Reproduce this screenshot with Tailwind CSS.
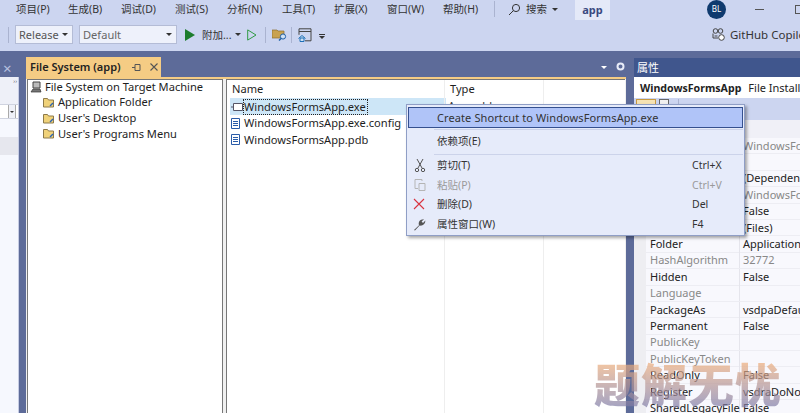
<!DOCTYPE html>
<html>
<head>
<meta charset="utf-8">
<script src="https://cdn.jsdelivr.net/npm/@tailwindcss/browser@4"></script>
</head>
<body class="m-0">
<div class="relative w-[800px] h-[413px] overflow-hidden bg-[#5d6b99] text-[11.1px] leading-[16px] text-[#1e1e1e] font-['Noto_Sans','Noto_Sans_CJK_SC',sans-serif]">
  <!-- menu bar -->
  <div class="h-[17px] bg-[#ccd5f0] flex items-center text-[10.5px] text-[#333] pl-[16px] pt-[1px] [&>*]:shrink-0">
    <span class="w-[52px]">项目(P)</span><span class="w-[53px]">生成(B)</span><span class="w-[54px]">调试(D)</span><span class="w-[52px]">测试(S)</span><span class="w-[55px]">分析(N)</span><span class="w-[52px]">工具(T)</span><span class="w-[53px]">扩展(X)</span><span class="w-[56px]">窗口(W)</span><span class="w-[51px]">帮助(H)</span>
    <span class="w-px h-[16px] bg-[#aab3d0] mr-[13px]"></span>
    <svg class="w-[13px] h-[13px] mr-[5px]" viewBox="0 0 13 13" fill="none" stroke="#333"><circle cx="8" cy="5" r="3.6"/><path d="M5.4 7.6L1 12"/></svg>
    <span class="w-[33px]">搜索</span>
    <span class="w-0 h-0 border-x-[3px] border-x-transparent border-t-[3px] border-t-[#333] ml-[-7px] mr-[17px]"></span>
    <span class="w-[35px] h-[20px] bg-[#e4e9f8] mt-[1px] flex items-center justify-center font-bold text-[#3a4a80] text-[11px]">app</span>
    <span class="ml-[97px] w-[19px] h-[19px] rounded-full bg-[#0f3a6e] text-white text-[8px] flex items-center justify-center">BL</span>
    <span class="ml-[29px] w-[9px] h-px bg-[#555]"></span>
    <span class="ml-[31px] w-[9px] h-[9px] border border-[#555]"></span>
  </div>
  <!-- toolbar -->
  <div class="h-[34px] bg-[#ccd5f0] flex items-center pt-[1px] pl-[6px] text-[#333] [&>*]:shrink-0">
    <span class="w-px h-[16px] bg-[#aab3d0] ml-[2px] mr-[6px]"></span>
    <div class="w-[58px] h-[19px] bg-[#eef1fb] border border-[#b4bcd6] flex items-center justify-between px-[3px] text-[#555] text-[11px]">Release<span class="w-0 h-0 border-x-[3px] border-x-transparent border-t-[3px] border-t-[#333] mr-[1px]"></span></div>
    <div class="w-[98px] h-[19px] bg-[#eef1fb] border border-[#b4bcd6] flex items-center justify-between px-[3px] ml-[6px] text-[#666]">Default<span class="w-0 h-0 border-x-[3px] border-x-transparent border-t-[3px] border-t-[#333] mr-[1px]"></span></div>
    <svg class="ml-[8px] w-[10px] h-[12px]" viewBox="0 0 10 12"><path d="M0 0L10 6L0 12Z" fill="#1c7c2d"/></svg>
    <span class="ml-[7px] text-[10.5px] w-[29px] whitespace-nowrap">附加...</span>
    <span class="ml-[4px] w-0 h-0 border-x-[3px] border-x-transparent border-t-[3px] border-t-[#333]"></span>
    <svg class="ml-[6px] w-[10px] h-[12px]" viewBox="0 0 10 12" fill="none" stroke="#2f9a44"><path d="M.7.9L9 6L.7 11.1Z"/></svg>
    <span class="w-px h-[16px] bg-[#aab3d0] ml-[8px] mr-[6px]"></span>
    <svg class="w-[15px] h-[13px]" viewBox="0 0 15 13"><path d="M0 2h5l1 1h6v7H0z" fill="#c9a24f" stroke="#8a6d2c" stroke-width=".7"/><circle cx="11" cy="8.5" r="2.6" fill="#cfe0f4" stroke="#1d5fa8"/><path d="M9 10.5L7 12.5" stroke="#1d5fa8" stroke-width="1.4"/></svg>
    <span class="w-px h-[16px] bg-[#aab3d0] ml-[4px] mr-[6px]"></span>
    <svg class="w-[14px] h-[14px]" viewBox="0 0 14 14" fill="none"><path d="M1 .8h12v12H7M1 .8v6M1 3.5h12" stroke="#444"/><path d="M.5 10.5L4 7.5l3.5 3M2 10v3.5h4V10z" fill="#cfe0f4" stroke="#1d70b8"/></svg>
    <span class="ml-[7px] mt-[4px] w-[6px] flex flex-col gap-[1px]"><span class="h-px bg-[#333]"></span><span class="w-0 h-0 border-x-[3px] border-x-transparent border-t-[3px] border-t-[#333]"></span></span>
    <svg class="ml-[387px] w-[13px] h-[13px]" viewBox="0 0 13 13" fill="none" stroke="#444"><circle cx="3.5" cy="3" r="2.3"/><circle cx="8.5" cy="3" r="2.3"/><path d="M1 5.5v4.5h5M2.5 8h3"/><circle cx="9.5" cy="9.5" r="2.8" fill="#fff"/></svg>
    <span class="ml-[5px] whitespace-nowrap text-[11.5px]">GitHub Copilot</span>
  </div>
  <!-- main -->
  <div class="h-[362px] flex">
    <!-- left sliver -->
    <div class="w-[19px] flex flex-col shrink-0">
      <div class="h-[26px] relative shrink-0"><span class="absolute left-[3px] top-[7px] text-[#b8c2e0] text-[15px] leading-[20px]">×</span></div>
      <div class="flex-1 bg-[#f6f8fe] border-r border-[#c6cce4] flex flex-col">
        <div class="h-[27px] bg-[#eef0f8] text-[6px] leading-[8px] text-right pr-[1px] text-[#555]">››</div>
        <div class="h-[15px] bg-white border-y border-[#cfd3e0] flex justify-end"><span class="w-[8px] border-x border-[#aaa] mr-[2px] flex items-center justify-center bg-[#eef0f8]"><span class="w-0 h-0 border-x-[2px] border-x-transparent border-t-[2px] border-t-[#333]"></span></span></div>
        <div class="h-[18px]"></div>
        <div class="h-[18px] bg-[#e6e7ee]"></div>
      </div>
    </div>
    <!-- document well -->
    <div class="w-[600px] ml-[7px] mt-[6px] flex flex-col shrink-0">
      <div class="w-[135px] h-[20px] bg-[#f5cc84] flex items-center pl-[4px] font-semibold text-[#222] text-[11px] whitespace-nowrap">File System (app)
        <svg class="ml-[11px] w-[9px] h-[9px]" viewBox="0 0 9 9" fill="none" stroke="#555"><path d="M0 4.5h3M3 1.5v6M3 1.5h5M3 7.5h5M8 1.5v6"/></svg>
        <svg class="ml-[9px] w-[8px] h-[8px]" viewBox="0 0 8 8" stroke="#555" stroke-width="1.1"><path d="M.5.5l7 7M7.5.5l-7 7"/></svg>
      </div>
      <div class="h-[2px] bg-[#f5cc84]"></div>
      <div class="flex-1 flex gap-[3px] bg-[#f0f0f0] overflow-hidden pl-[1px]">
        <!-- tree -->
        <div class="w-[196px] bg-white pl-[2px] border-x border-t border-[#777]">
          <div class="h-[14.5px] flex items-center whitespace-nowrap">
            <svg class="w-[12px] h-[12px] mr-[3px]" viewBox="0 0 12 12"><path d="M3 1h7v6H3z" fill="#bbb" stroke="#444"/><path d="M1 11l2-3h7l1 3z" fill="#777" stroke="#333" stroke-width=".7"/></svg>File System on Target Machine</div>
          <div class="h-[15.7px] flex items-center whitespace-nowrap pl-[13px]"><svg class="w-[12px] h-[11px] mr-[3px]" viewBox="0 0 12 11"><path d="M.5 1.5h4l1 1.5h5v7h-10z" fill="#f0d27a" stroke="#8d7a4a"/><path d="M7 9l3-3" stroke="#2b65b5" stroke-width="1.5"/></svg>Application Folder</div>
          <div class="h-[15.7px] flex items-center whitespace-nowrap pl-[13px]"><svg class="w-[12px] h-[11px] mr-[3px]" viewBox="0 0 12 11"><path d="M.5 1.5h4l1 1.5h5v7h-10z" fill="#f0d27a" stroke="#8d7a4a"/><path d="M7 9l3-3" stroke="#2b65b5" stroke-width="1.5"/></svg>User's Desktop</div>
          <div class="h-[15.7px] flex items-center whitespace-nowrap pl-[13px]"><svg class="w-[12px] h-[11px] mr-[3px]" viewBox="0 0 12 11"><path d="M.5 1.5h4l1 1.5h5v7h-10z" fill="#f0d27a" stroke="#8d7a4a"/><path d="M7 9l3-3" stroke="#2b65b5" stroke-width="1.5"/></svg>User's Programs Menu</div>
        </div>
        <!-- list -->
        <div class="w-[399px] bg-white border-l border-t border-[#777] pl-[3px] pt-[1px] relative">
          <div class="flex h-[16px] ml-[2px]"><span class="w-[215px]">Name</span><span class="pl-[3px]">Type</span></div>
          <div class="absolute left-[217px] top-0 bottom-0 w-px bg-[#eeeeee]"></div>
          <div class="absolute left-[316px] top-0 bottom-0 w-px bg-[#eeeeee]"></div>
          <div class="h-[17px] mt-[1px] flex items-center w-[216px] bg-[#cde6f7] whitespace-nowrap"><svg class="w-[12px] h-[8px] ml-[1px]" viewBox="0 0 12 8"><path d="M2.5.5h9v7h-9z" fill="#fff" stroke="#556"/><path d="M0 4h2" stroke="#556"/></svg><span class="border border-dotted border-[#222] h-[16px] flex items-center pr-[1px]">WindowsFormsApp.exe</span></div>
          <div class="h-[16.6px] flex items-center whitespace-nowrap"><svg class="w-[9px] h-[11px] ml-[1px] mr-[4px]" viewBox="0 0 9 11" fill="#fff" stroke="#2a5ca8"><path d="M.5.5h8v10h-8z"/><path d="M2 3.5h5M2 5.5h5M2 7.5h5"/></svg>WindowsFormsApp.exe.config</div>
          <div class="h-[16.6px] flex items-center whitespace-nowrap"><svg class="w-[9px] h-[11px] ml-[1px] mr-[4px]" viewBox="0 0 9 11" fill="#fff" stroke="#2a5ca8"><path d="M.5.5h8v10h-8z"/><path d="M2 3.5h5M2 5.5h5M2 7.5h5"/></svg>WindowsFormsApp.pdb</div>
          <span class="absolute left-[221px] top-[18px] text-[#333]">Assembly</span>
        </div>
      </div>
    </div>
    <!-- properties -->
    <div class="w-[166px] ml-[8px] mt-[7px] flex flex-col shrink-0 bg-[#f6f6fb] [&>*]:shrink-0">
      <div class="h-[19px] bg-[#40568d] text-white text-[11px] pl-[3px] flex items-center">属性</div>
      <div class="h-[21px] bg-white flex items-center pl-[6px] whitespace-nowrap overflow-hidden text-[#222] text-[11px]"><b class="font-bold mr-[7px] text-[10.6px]">WindowsFormsApp</b>File Installation</div>
      <div class="h-[22px] bg-[#ccd5f0] flex items-start pt-[1px] pl-[2px] gap-[3px]">
        <span class="w-[20px] h-[14px] bg-[#f5e2b4] border border-[#c89a40]"></span>
        <span class="w-[10px] h-[12px] bg-[#f0f0f0] border border-[#666]"></span>
        <span class="w-px h-[12px] bg-[#aab3d0] ml-[6px]"></span>
      </div>
      <div class="h-[18px] bg-[#f0f0f7]"></div>
      <div class="pl-[12px] bg-[#eeeef2] text-[11px]">
        <div class="bg-[#f8f8fd] text-[#222] [&>div]:h-[16.4px] [&>div]:flex [&>div]:items-center [&>div]:border-b [&>div]:border-[#ededf3] [&_span:first-child]:w-[94px] [&_span:first-child]:pl-[4px] [&_span:first-child]:border-r [&_span:first-child]:border-[#e5e5ec] [&_span:first-child]:shrink-0 [&_span:first-child]:whitespace-nowrap [&_span:last-child]:pl-[3px] [&_span:last-child]:whitespace-nowrap">
          <div class="text-[#888]"><span></span><span>WindowsFormsApp</span></div>
          <div><span></span><span></span></div>
          <div><span></span><span>(Dependencies)</span></div>
          <div class="text-[#888]"><span></span><span>WindowsFormsApp</span></div>
          <div><span></span><span>False</span></div>
          <div><span></span><span>(Files)</span></div>
          <div><span>Folder</span><span>Application</span></div>
          <div class="text-[#888]"><span>HashAlgorithm</span><span>32772</span></div>
          <div><span>Hidden</span><span>False</span></div>
          <div class="text-[#888]"><span>Language</span><span></span></div>
          <div><span>PackageAs</span><span>vsdpaDefault</span></div>
          <div><span>Permanent</span><span>False</span></div>
          <div class="text-[#888]"><span>PublicKey</span><span></span></div>
          <div class="text-[#888]"><span>PublicKeyToken</span><span></span></div>
          <div><span>ReadOnly</span><span>False</span></div>
          <div><span>Register</span><span>vsdraDoNotRegister</span></div>
          <div><span>SharedLegacyFile</span><span>False</span></div>
        </div>
      </div>
    </div>
  </div>
  <!-- doc well dropdown + gear -->
  <span class="absolute left-[601px] top-[66px] w-0 h-0 border-x-[3px] border-x-transparent border-t-[3px] border-t-white"></span>
  <svg class="absolute left-[616px] top-[62px] w-[9px] h-[9px]" viewBox="0 0 9 9"><circle cx="4.5" cy="4.5" r="3" fill="none" stroke="#e8ecf8" stroke-width="2"/></svg>
  <!-- context menu -->
  <div class="absolute left-[406px] top-[104px] w-[339px] h-[132px] bg-[#e6ebfa] border border-[#8f9ec6] shadow-[2px_2px_3px_rgba(0,0,0,0.35)] pt-[1px] px-[1px] text-[#333]">
    <div class="h-[21px] mt-[1px] bg-[#b0c4f8] border border-[#35508f] flex items-center pl-[28px] text-[11px] tracking-[.1px] whitespace-nowrap">Create Shortcut to WindowsFormsApp.exe</div>
    <div class="h-px bg-[#ccd3ea] ml-[26px] mt-[1px]"></div>
    <div class="h-[22px] flex items-center pl-[29px] pb-[2px] text-[10.5px] mt-[1px]">依赖项(E)</div>
    <div class="h-px bg-[#ccd3ea] ml-[26px] mt-[1px]"></div>
    <div class="h-[20px] flex items-center text-[10.5px]"><svg class="w-[12px] h-[14px] ml-[6px] mr-[11px]" viewBox="0 0 12 14" fill="none" stroke="#555"><path d="M3 1l5 9M9 1l-5 9"/><circle cx="3" cy="12" r="1.7"/><circle cx="9" cy="12" r="1.7"/></svg><span class="w-[255px]">剪切(T)</span><span>Ctrl+X</span></div>
    <div class="h-[19.5px] flex items-center text-[10.5px] text-[#9a9a9a]"><svg class="w-[12px] h-[13px] ml-[6px] mr-[11px]" viewBox="0 0 12 13" fill="none" stroke="#b5b5b5"><path d="M8 3V1.5H1v9h3"/><path d="M5 5.5h6v7H5z"/></svg><span class="w-[255px]">粘贴(P)</span><span>Ctrl+V</span></div>
    <div class="h-[19.5px] flex items-center text-[10.5px]"><svg class="w-[12px] h-[12px] ml-[5px] mr-[12px]" viewBox="0 0 12 12" stroke="#d9333f" stroke-width="1.1"><path d="M1 1l10 10M11 1L1 11"/></svg><span class="w-[255px]">删除(D)</span><span>Del</span></div>
    <div class="h-[20px] flex items-center text-[10.5px]"><svg class="w-[13px] h-[13px] ml-[5px] mr-[11px]" viewBox="0 0 13 13"><path d="M1 12L6 7.2C5 4 7 1 11 1.2L8.6 3.6L10 5L12.3 2.6C12.4 6.4 9.4 8.2 6.6 7.6L2 12.4Z" fill="#555"/></svg><span class="w-[255px]">属性窗口(W)</span><span>F4</span></div>
  </div>
  <!-- watermark -->
  <div class="absolute left-[594px] top-[358px] text-[46px] leading-[52px] font-black tracking-[1px] whitespace-nowrap bg-gradient-to-b from-[#f8b070]/70 to-[#7878a8]/70 bg-clip-text text-transparent">题解无忧</div>
</div>
</body>
</html>
